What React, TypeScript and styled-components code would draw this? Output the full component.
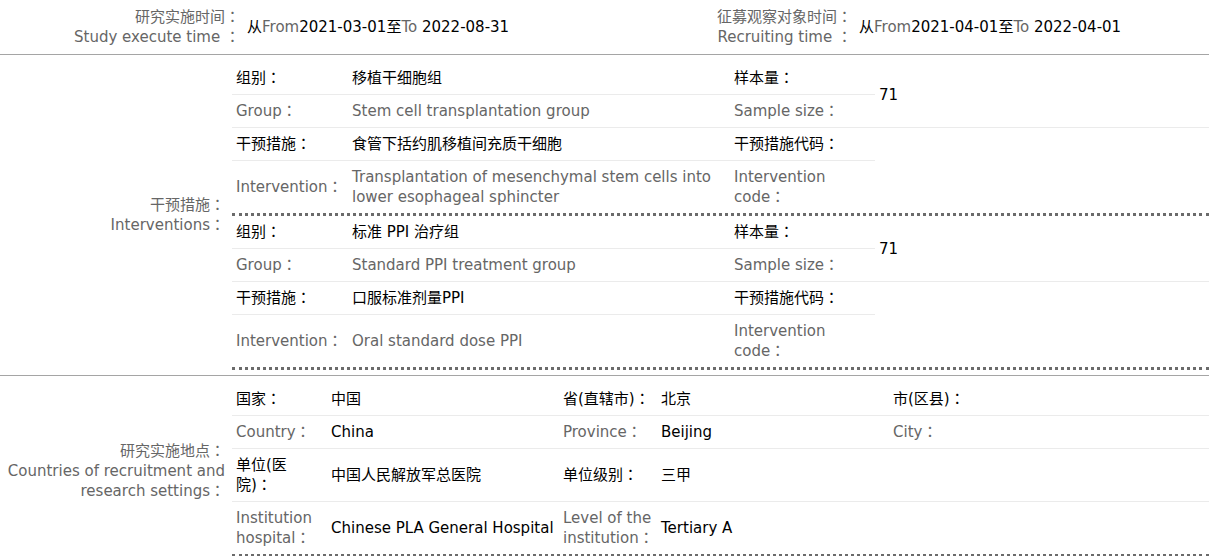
import React from 'react';
import styled, { createGlobalStyle } from 'styled-components';

const GlobalStyle = createGlobalStyle`
  html, body {
    margin: 0;
    padding: 0;
    background: #fff;
  }
  body {
    font-family: "DejaVu Sans", "Noto Sans CJK SC", sans-serif;
    font-size: 15px;
    line-height: 20px;
    color: #000;
  }
`;

const Page = styled.div`
  width: 1209px;
`;

const TimeRow = styled.div`
  display: grid;
  grid-template-columns: 240px 360px 252px 1fr;
  border-bottom: 1px solid #a5a5a5;
`;

const SideLabel = styled.div`
  display: flex;
  flex-direction: column;
  justify-content: center;
  align-items: flex-end;
  text-align: right;
  color: #666;
  padding: 7px 0;
`;

const TimeValue = styled.div`
  display: flex;
  align-items: center;
  padding-left: 7px;
  white-space: nowrap;
`;

const Dim = styled.span`
  color: #666;
`;

// centred full-width colon, as in the original page; line-height 0 keeps the rows at 20px
const Colon = styled.span`
  font-family: "Noto Sans CJK JP", sans-serif;
  line-height: 0;
`;

const Section = styled.div`
  display: grid;
  grid-template-columns: 232px 1fr;
  border-bottom: 1px solid #a5a5a5;
`;

const SectionLabel = styled(SideLabel)`
  padding: 0 7px 0 0;
`;

const SectionBody = styled.div<{ $pb?: number }>`
  padding: 7px 0 ${(p) => p.$pb ?? 5}px;
`;

const SubTable = styled.div<{ $cols: string }>`
  display: grid;
  grid-template-columns: ${(p) => p.$cols};
  border-bottom: 3px dotted #6b6b6b;
`;

interface CellProps {
  $muted?: boolean;
  $last?: boolean;
  $rows?: number;
  $span?: number;
  $pr?: number;
}

const Cell = styled.div<CellProps>`
  display: flex;
  align-items: center;
  padding: 6px ${(p) => p.$pr ?? 2}px 6px 4px;
  color: ${(p) => (p.$muted ? '#666' : '#000')};
  border-bottom: ${(p) => (p.$last ? 'none' : '1px solid #ebebeb')};
  grid-row: ${(p) => (p.$rows ? `span ${p.$rows}` : 'auto')};
  grid-column: ${(p) => (p.$span ? `span ${p.$span}` : 'auto')};
`;

const Label = ({ text }: { text: string }) => (
  <span>
    {text}
    <Colon>：</Colon>
  </span>
);

const interventions = [
  {
    group: '移植干细胞组',
    groupEn: 'Stem cell transplantation group',
    size: '71',
    measure: '食管下括约肌移植间充质干细胞',
    measureEn: 'Transplantation of mesenchymal stem cells into lower esophageal sphincter'
  },
  {
    group: '标准 PPI 治疗组',
    groupEn: 'Standard PPI treatment group',
    size: '71',
    measure: '口服标准剂量PPI',
    measureEn: 'Oral standard dose PPI'
  }
];

const Period = ({ from, to }: { from: string; to: string }) => (
  <TimeValue>
    从<Dim>From</Dim>
    {from}至<Dim>To</Dim>&nbsp;{to}
  </TimeValue>
);

const App = () => (
  <Page>
    <GlobalStyle />
    <TimeRow>
      <SideLabel>
        <div><Label text="研究实施时间" /></div>
        <div><Label text="Study execute time " /></div>
      </SideLabel>
      <Period from="2021-03-01" to="2022-08-31" />
      <SideLabel>
        <div><Label text="征募观察对象时间" /></div>
        <div><Label text="Recruiting time " /></div>
      </SideLabel>
      <Period from="2021-04-01" to="2022-04-01" />
    </TimeRow>

    <Section>
      <SectionLabel>
        <div><Label text="干预措施" /></div>
        <div><Label text="Interventions" /></div>
      </SectionLabel>
      <SectionBody>
        {interventions.map((item) => (
          <SubTable key={item.group} $cols="116px 382px 145px 1fr">
            <Cell $pr={0}><Label text="组别" /></Cell>
            <Cell>{item.group}</Cell>
            <Cell><Label text="样本量" /></Cell>
            <Cell $rows={2}>{item.size}</Cell>

            <Cell $muted $pr={0}><Label text="Group" /></Cell>
            <Cell $muted>{item.groupEn}</Cell>
            <Cell $muted><Label text="Sample size" /></Cell>

            <Cell $pr={0}><Label text="干预措施" /></Cell>
            <Cell>{item.measure}</Cell>
            <Cell><Label text="干预措施代码" /></Cell>
            <Cell $rows={2} $last />

            <Cell $muted $last $pr={0}><Label text="Intervention" /></Cell>
            <Cell $muted $last>{item.measureEn}</Cell>
            <Cell $muted $last><Label text="Intervention code" /></Cell>
          </SubTable>
        ))}
      </SectionBody>
    </Section>

    <Section>
      <SectionLabel>
        <div><Label text="研究实施地点" /></div>
        <div>Countries of recruitment and</div>
        <div><Label text="research settings" /></div>
      </SectionLabel>
      <SectionBody $pb={9}>
        <SubTable $cols="95px 232px 98px 232px 96px 1fr">
          <Cell $pr={12}><Label text="国家" /></Cell>
          <Cell>中国</Cell>
          <Cell $pr={4}><Label text="省(直辖市)" /></Cell>
          <Cell>北京</Cell>
          <Cell><Label text="市(区县)" /></Cell>
          <Cell />

          <Cell $muted $pr={12}><Label text="Country" /></Cell>
          <Cell>China</Cell>
          <Cell $muted $pr={4}><Label text="Province" /></Cell>
          <Cell>Beijing</Cell>
          <Cell $muted><Label text="City" /></Cell>
          <Cell />

          <Cell $pr={12}><Label text="单位(医院)" /></Cell>
          <Cell>中国人民解放军总医院</Cell>
          <Cell $pr={4}><Label text="单位级别" /></Cell>
          <Cell>三甲</Cell>
          <Cell $span={2} />

          <Cell $muted $last $pr={12}><Label text="Institution hospital" /></Cell>
          <Cell $last>Chinese PLA General Hospital</Cell>
          <Cell $muted $last $pr={4}><Label text="Level of the institution" /></Cell>
          <Cell $last>Tertiary A</Cell>
          <Cell $span={2} $last />
        </SubTable>
      </SectionBody>
    </Section>
  </Page>
);

export default App;
